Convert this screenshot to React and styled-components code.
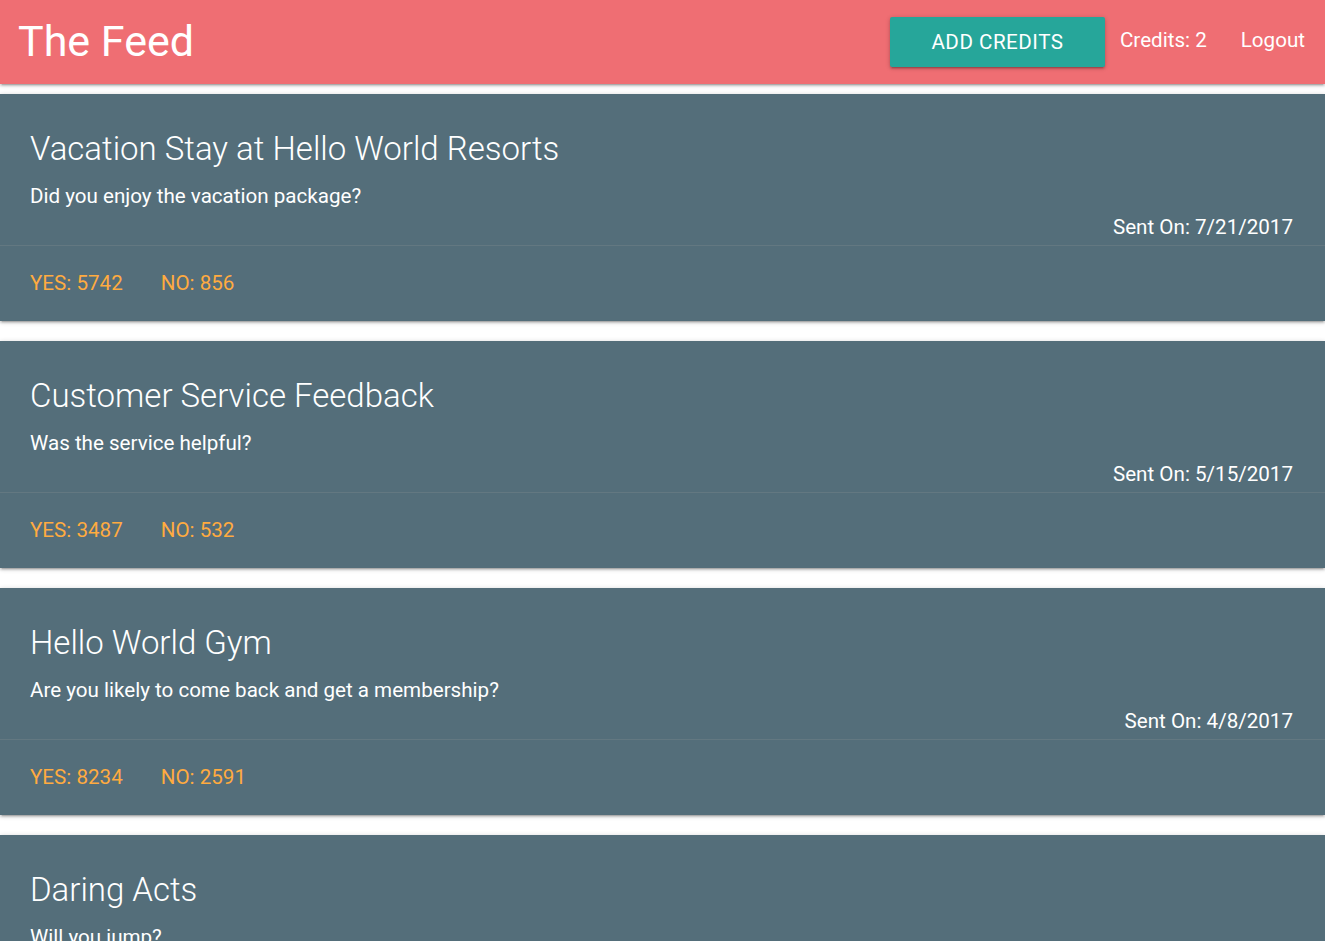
import React from "react";
import styled, { createGlobalStyle } from "styled-components";

const Global = createGlobalStyle`
  html, body { margin: 0; padding: 0; background: #ffffff; }
  body { font-family: Roboto, "Noto Sans", "Liberation Sans", sans-serif; color: rgba(0,0,0,0.87); }
  * { box-sizing: border-box; }
`;

const Nav = styled.nav`
  height: 84px;
  background: #ef6e73;
  display: flex;
  align-items: center;
  justify-content: space-between;
  padding: 0 20px 0 18px;
  box-shadow: 0 2px 2px 0 rgba(0,0,0,0.14), 0 3px 1px -2px rgba(0,0,0,0.12), 0 1px 5px 0 rgba(0,0,0,0.2);
  position: relative;
  z-index: 2;
`;

const Brand = styled.a`
  color: #fff;
  font-size: 43px;
  font-weight: 400;
  line-height: 84px;
  text-decoration: none;
  margin-top: -3px;
`;

const Menu = styled.ul`
  list-style: none;
  margin: 0;
  padding: 0;
  display: flex;
  align-items: center;
`;

const Item = styled.li`
  display: flex;
  align-items: center;
  margin-left: ${p => p.$gap || 0}px;
`;

const Button = styled.button`
  width: 215px;
  height: 50px;
  border: none;
  border-radius: 2px;
  background: #26a69a;
  color: #fff;
  font-family: inherit;
  font-size: 20.6px;
  letter-spacing: 0.5px;
  text-transform: uppercase;
  box-shadow: 0 2px 2px 0 rgba(0,0,0,0.14), 0 3px 1px -2px rgba(0,0,0,0.12), 0 1px 5px 0 rgba(0,0,0,0.2);
  cursor: pointer;
  padding: 0;
  line-height: 50px;
`;

const NavLink = styled.a`
  color: #fff;
  font-size: 20.6px;
  text-decoration: none;
  margin-top: -4px;
`;

const List = styled.main`
  padding-top: 10px;
  display: flex;
  flex-direction: column;
  gap: 20px;
`;

const Card = styled.div`
  background: #546e7a;
  color: #fff;
  box-shadow: 0 2px 2px 0 rgba(0,0,0,0.14), 0 3px 1px -2px rgba(0,0,0,0.12), 0 1px 5px 0 rgba(0,0,0,0.2);
`;

const Content = styled.div`
  padding: 33px 32px 3px 30px;
`;

const Title = styled.span`
  display: block;
  font-size: 33px;
  font-weight: 300;
  line-height: 44px;
  margin-bottom: 10px;
`;

const Text = styled.p`
  margin: 0;
  font-size: 20.6px;
  line-height: 30px;
  text-align: ${p => (p.$right ? "right" : "left")};
  margin-top: ${p => (p.$right ? 1 : 0)}px;
`;

const Action = styled.div`
  border-top: 1px solid rgba(160,160,160,0.2);
  padding: 22px 30px 23px;
  display: flex;
  gap: 38px;
`;

const Vote = styled.a`
  color: #ffab40;
  font-size: 20.6px;
  line-height: 30px;
  text-transform: uppercase;
  text-decoration: none;
`;

const surveys = [
  { title: "Vacation Stay at Hello World Resorts", body: "Did you enjoy the vacation package?", date: "7/21/2017", yes: 5742, no: 856 },
  { title: "Customer Service Feedback", body: "Was the service helpful?", date: "5/15/2017", yes: 3487, no: 532 },
  { title: "Hello World Gym", body: "Are you likely to come back and get a membership?", date: "4/8/2017", yes: 8234, no: 2591 },
  { title: "Daring Acts", body: "Will you jump?", date: "3/2/2017", yes: 1204, no: 987 },
];

export default function App() {
  return (
    <>
      <Global />
      <Nav>
        <Brand href="#">The Feed</Brand>
        <Menu>
          <Item><Button>Add Credits</Button></Item>
          <Item $gap={15}><NavLink href="#">Credits: 2</NavLink></Item>
          <Item $gap={34}><NavLink href="#">Logout</NavLink></Item>
        </Menu>
      </Nav>
      <List>
        {surveys.map(s => (
          <Card key={s.title}>
            <Content>
              <Title>{s.title}</Title>
              <Text>{s.body}</Text>
              <Text $right>Sent On: {s.date}</Text>
            </Content>
            <Action>
              <Vote href="#">Yes: {s.yes}</Vote>
              <Vote href="#">No: {s.no}</Vote>
            </Action>
          </Card>
        ))}
      </List>
    </>
  );
}
